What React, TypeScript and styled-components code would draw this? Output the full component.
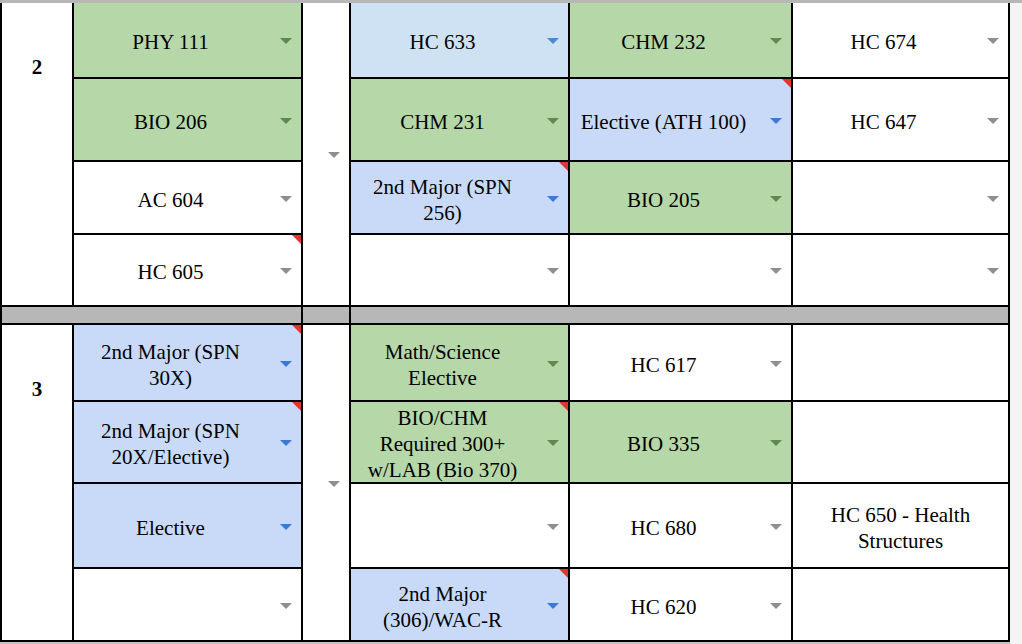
import React from "react";
import styled, { createGlobalStyle } from "styled-components";

// Cell tones used in the sheet
type Tone = "green" | "blue" | "sky" | "white";

type Course = {
  text?: string;
  tone?: Tone;
  menu?: boolean;
  note?: boolean;
};

type Section = {
  label: string;
  rows: Course[][];
};

const SERIF = `"Liberation Serif", "DejaVu Serif", serif`;

const fills: Record<Tone, string> = {
  green: "#b6d7a8",
  blue: "#c9daf8",
  sky: "#cfe2f3",
  white: "#ffffff",
};

const arrowColors: Record<Tone, string> = {
  green: "#5f8a4d",
  blue: "#3c78d8",
  sky: "#4a8bd3",
  white: "#8f8f8f",
};

const sections: Section[] = [
  {
    label: "2",
    rows: [
      [
        { text: "PHY 111", tone: "green", menu: true },
        { text: "HC 633", tone: "sky", menu: true },
        { text: "CHM 232", tone: "green", menu: true },
        { text: "HC 674", menu: true },
      ],
      [
        { text: "BIO 206", tone: "green", menu: true },
        { text: "CHM 231", tone: "green", menu: true },
        { text: "Elective (ATH 100)", tone: "blue", menu: true, note: true },
        { text: "HC 647", menu: true },
      ],
      [
        { text: "AC 604", menu: true },
        { text: "2nd Major (SPN 256)", tone: "blue", menu: true, note: true },
        { text: "BIO 205", tone: "green", menu: true },
        { menu: true },
      ],
      [
        { text: "HC 605", menu: true, note: true },
        { menu: true },
        { menu: true },
        { menu: true },
      ],
    ],
  },
  {
    label: "3",
    rows: [
      [
        { text: "2nd Major (SPN 30X)", tone: "blue", menu: true, note: true },
        { text: "Math/Science Elective", tone: "green", menu: true },
        { text: "HC 617", menu: true },
        {},
      ],
      [
        { text: "2nd Major (SPN 20X/Elective)", tone: "blue", menu: true, note: true },
        { text: "BIO/CHM Required 300+ w/LAB (Bio 370)", tone: "green", menu: true, note: true },
        { text: "BIO 335", tone: "green", menu: true },
        {},
      ],
      [
        { text: "Elective", tone: "blue", menu: true },
        { menu: true },
        { text: "HC 680", menu: true },
        { text: "HC 650 - Health Structures" },
      ],
      [
        { menu: true },
        { text: "2nd Major (306)/WAC-R", tone: "blue", menu: true, note: true },
        { text: "HC 620", menu: true },
        {},
      ],
    ],
  },
];

const GlobalStyle = createGlobalStyle`
  html, body {
    margin: 0;
    padding: 0;
    background: #f4f4f4;
  }
  body {
    font-family: ${SERIF};
  }
`;

const DropArrow: React.FC<{ tone: Tone }> = ({ tone }) => (
  <Styled.Arrow width="12" height="6" viewBox="0 0 12 6">
    <polygon points="0,0 12,0 6,6" fill={arrowColors[tone]} />
  </Styled.Arrow>
);

const CourseCell: React.FC<{ course: Course }> = ({ course }) => {
  const tone = course.tone ?? "white";
  return (
    <Styled.Cell $tone={tone} $menu={!!course.menu}>
      {course.text}
      {course.menu && <DropArrow tone={tone} />}
      {course.note && <Styled.Note />}
    </Styled.Cell>
  );
};

export default function App() {
  return (
    <>
      <GlobalStyle />
      <Styled.Page>
        <Styled.FreezeLine />
        <Styled.Sheet>
          {sections.map((section, si) => (
            <React.Fragment key={section.label}>
              {si > 0 && (
                <>
                  <Styled.Band $span={2} />
                  <Styled.Band $span={1} />
                  <Styled.Band $span={3} />
                </>
              )}
              {section.rows.map((row, ri) => (
                <React.Fragment key={ri}>
                  {ri === 0 && <Styled.Term>{section.label}</Styled.Term>}
                  <CourseCell course={row[0]} />
                  {ri === 0 && (
                    <Styled.Spacer>
                      <DropArrow tone="white" />
                    </Styled.Spacer>
                  )}
                  <CourseCell course={row[1]} />
                  <CourseCell course={row[2]} />
                  <CourseCell course={row[3]} />
                </React.Fragment>
              ))}
            </React.Fragment>
          ))}
        </Styled.Sheet>
        <Styled.BottomLine />
      </Styled.Page>
    </>
  );
}

const Styled = {
  Page: styled.div`
    width: 1022px;
    height: 644px;
    overflow: hidden;
    display: flex;
    flex-direction: column;
    font-family: ${SERIF};
  `,
  FreezeLine: styled.div`
    height: 3px;
    background: #b7b7b7;
    flex-shrink: 0;
  `,
  BottomLine: styled.div`
    height: 2px;
    width: 1010px;
    background: #c4c4c4;
    flex-shrink: 0;
  `,
  Sheet: styled.div`
    display: grid;
    grid-template-columns: 70px 227px 46px 217px 221px 215px;
    grid-template-rows: 74px 81px 71px 70px 16px 75px 80px 83px 71px;
    gap: 2px;
    padding: 0 2px 2px;
    width: fit-content;
    background: #000;
    flex-shrink: 0;
  `,
  Term: styled.div`
    grid-row: span 4;
    background: #fff;
    padding-top: 51px;
    text-align: center;
    font-family: ${SERIF};
    font-weight: bold;
    font-size: 21px;
    line-height: 26px;
    color: #000;
  `,
  Spacer: styled.div`
    grid-row: span 4;
    position: relative;
    background: #fff;
  `,
  Band: styled.div<{ $span: number }>`
    grid-column: span ${(p) => p.$span};
    background: #b7b7b7;
  `,
  Cell: styled.div<{ $tone: Tone; $menu: boolean }>`
    position: relative;
    display: flex;
    align-items: center;
    justify-content: center;
    text-align: center;
    padding: 4px ${(p) => (p.$menu ? "42px" : "8px")} 0 8px;
    background: ${(p) => fills[p.$tone]};
    font-family: ${SERIF};
    font-size: 21px;
    line-height: 26px;
    color: #000;
  `,
  Arrow: styled.svg`
    position: absolute;
    right: 9px;
    top: 50%;
    margin-top: -2px;
  `,
  Note: styled.span`
    position: absolute;
    top: 0;
    right: 0;
    width: 0;
    height: 0;
    border-top: 9px solid #e0362b;
    border-left: 9px solid transparent;
  `,
};
